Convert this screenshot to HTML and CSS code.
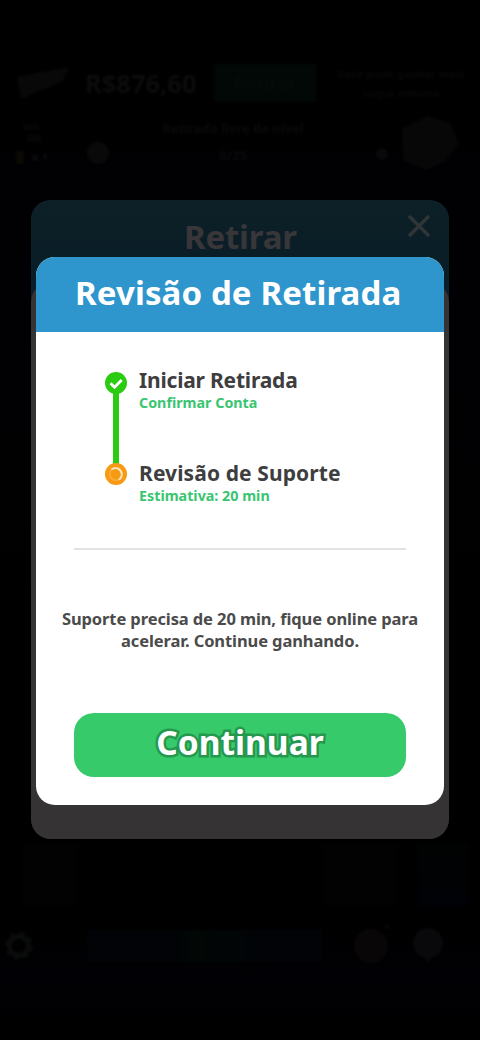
FILE: index.html
```html
<!DOCTYPE html>
<html lang="pt-BR">
<head>
<meta charset="utf-8">
<title>Revisão de Retirada</title>
<link rel="stylesheet" href="styles.css">
</head>
<body>
<div class="screen">
  <div class="game">
    <div class="top">
      <svg class="cash" viewBox="0 0 56 36"><path d="M2 12 54 2 48 16 6 34Z" fill="#080808"/></svg>
      <span class="balance">R$876,60</span>
      <span class="withdraw">Retirar</span>
      <span class="hint">Você pode ganhar mais<br>saque mínimo</span>
    </div>
    <div class="level">
      <svg class="coin" viewBox="0 0 36 50"><path d="M8 4h16v6H8zm4 10h14v8H12z" fill="#050505"/><path d="M1 31h8v13H1z" fill="#0a0904"/><path d="M17 35h6v6h-6zM27 34h6l-3 8" fill="#09090e"/></svg>
      <svg class="dot" viewBox="0 0 24 24"><circle cx="12" cy="12" r="11" fill="#09090a"/></svg>
      <span class="goal">Retirada livre de nível<br><small>0/25</small></span>
      <svg class="star" viewBox="0 0 14 14"><circle cx="7" cy="7" r="6" fill="#09090b"/></svg>
      <svg class="prize" viewBox="0 0 60 58"><path d="M2 14 28 2 50 9 59 30 44 48 26 56 3 47Z" fill="#070707"/></svg>
    </div>
    <div class="tiles"><i class="tile"></i><i class="tile warm"></i><i class="tile cool"></i></div>
    <div class="bottom">
      <svg class="gear" viewBox="0 0 30 30"><circle cx="15" cy="15" r="9.500" fill="none" stroke="#0a0b0b" stroke-width="5"/><circle cx="15" cy="15" r="12.500" fill="none" stroke="#0a0b0b" stroke-width="3" stroke-dasharray="5 4.800"/></svg>
      <i class="bar"></i>
      <svg class="round" viewBox="0 0 36 36"><circle cx="18" cy="18" r="17" fill="#090607"/><path d="m31 0 4-5v6z" fill="#0a0a0a"/></svg>
      <svg class="round" viewBox="0 0 36 36"><circle cx="17" cy="15" r="15" fill="#09080a"/><path d="m12 26 5 10 5-10" fill="#09080a"/></svg>
    </div>
  </div>

  <section class="back-modal">
    <header class="back-head">
      <h2 class="back-title">Retirar</h2>
      <svg class="close" viewBox="0 0 24 24"><path d="M2 2 22 22M22 2 2 22" stroke="#303638" stroke-width="3.400"/></svg>
    </header>
    <div class="back-body"></div>
  </section>

  <section class="modal">
    <header class="head"><h1 class="title">Revisão de Retirada</h1></header>
    <div class="content">
      <div class="steps">
        <svg class="track" viewBox="0 0 22 114">
          <path d="M11 11v91" stroke="#2acb10" stroke-width="6"/>
          <circle cx="11" cy="11" r="11" fill="#2acb10"/>
          <path d="m5.500 11.300 4 3.900 7.200-7.200" fill="none" stroke="#fff" stroke-width="2.800"/>
          <circle cx="11" cy="102" r="11" fill="#f79a12"/>
          <circle cx="11" cy="102" r="6.300" fill="none" stroke="#fbb044" stroke-width="1.500"/>
          <path d="M7.200 97A6.300 6.300 0 0 1 14.500 107.200" fill="none" stroke="#ffe9c4" stroke-width="2" stroke-linecap="round"/>
        </svg>
        <div class="labels">
          <div class="step done"><span class="name">Iniciar Retirada</span><span class="sub">Confirmar Conta</span></div>
          <div class="step active"><span class="name">Revisão de Suporte</span><span class="sub">Estimativa: 20 min</span></div>
        </div>
      </div>
      <hr class="rule">
      <p class="note">Suporte precisa de 20 min, fique online para<br>acelerar. Continue ganhando.</p>
      <button class="go" type="button">Continuar</button>
    </div>
  </section>
</div>
</body>
</html>
```
FILE: styles.css
```css
* { box-sizing: border-box; }
body { margin: 0; background: #000; font-family: "Noto Sans", sans-serif; font-weight: 700; }
h1, h2, p { margin: 0; white-space: nowrap; }
svg { display: block; flex: none; overflow: visible; }
.screen { position: relative; width: 480px; height: 1040px; overflow: hidden; background: #000; }

.game { display: flex; flex-direction: column; height: 1040px; padding-top: 64px; color: #0c0c0c; background: linear-gradient(#000 130px, #010104 170px, #010103 300px, #000 820px, #000 920px, #010105 980px, #000 1035px); }
.top { display: flex; align-items: center; height: 38px; padding-left: 15px; filter: blur(.8px); }
.cash { width: 56px; height: 36px; }
.balance { width: 126px; margin-left: 14px; font-size: 25.500px; white-space: nowrap; }
.withdraw { width: 102px; height: 38px; margin-left: 3px; background: #020806; color: #040b08; font-size: 18px; line-height: 38px; text-align: center; }
.hint { width: 150px; margin-left: 10px; color: #080808; font-size: 11px; line-height: 19px; text-align: center; white-space: nowrap; }
.level { display: flex; height: 60px; margin-top: 12px; padding-left: 15px; filter: blur(.8px); }
.coin { width: 36px; height: 50px; margin-top: 6px; }
.dot { width: 24px; height: 24px; margin: 27px 0 0 35px; }
.goal { width: 246px; margin-top: 1px; color: #0a0a0b; font-size: 13px; line-height: 27px; text-align: center; }
.goal small { font-size: 13px; }
.star { width: 14px; height: 14px; margin: 33px 0 0 19px; }
.prize { width: 60px; height: 58px; margin-left: 11px; }
.tiles { display: flex; gap: 8px; margin-top: 670px; padding-left: 22px; filter: blur(2px); }
.tile { width: 56px; height: 62px; background: #020202; }
.warm { width: 76px; margin-left: 236px; background: #030202; }
.cool { width: 50px; margin-left: 12px; background: linear-gradient(#010303, #010204 60%, #010208); }
.bottom { display: flex; align-items: center; height: 40px; margin-top: 20px; padding-left: 4px; filter: blur(.8px); }
.gear { width: 30px; height: 30px; }
.bar { width: 235px; height: 32px; margin-left: 53px; background: linear-gradient(90deg, #010306 35%, #020605 45%, #020505 65%, #010307 75%); }
.round { width: 36px; height: 36px; margin-left: 31px; }
.round + .round { margin-left: 22px; }

.back-modal { position: absolute; left: 31px; top: 200px; width: 418px; height: 639px; border-radius: 20px; background: #0a1f29; overflow: hidden; }
.back-head { display: flex; height: 82px; padding: 14px 18px 0 153px; justify-content: space-between; background: linear-gradient(#0d2027, #091d27); }
.back-title { color: #383639; font-size: 33px; letter-spacing: -.2px; line-height: 45px; }
.close { width: 24px; height: 24px; }
.back-body { height: 557px; border-radius: 20px 20px 0 0; background: #353334; }

.modal { position: absolute; left: 36px; top: 257px; width: 408px; height: 548px; border-radius: 19px; background: #fff; overflow: hidden; }
.head { height: 75px; padding-left: 39px; background: #2f95cd; }
.title { color: #fff; font-size: 33px; letter-spacing: .12px; line-height: 71px; }
.content { display: flex; flex-direction: column; padding: 40px 38px 0; }
.steps { display: flex; gap: 12px; height: 176px; padding-left: 31px; }
.track { width: 22px; height: 114px; }
.labels { display: flex; flex-direction: column; margin-top: -6px; }
.step { display: flex; flex-direction: column; align-items: flex-start; flex: none; height: 93px; white-space: nowrap; }
.name { color: #3e3e40; font-size: 21px; line-height: 28px; }
.done .name { letter-spacing: -.2px; }
.active .name { letter-spacing: .1px; }
.sub { color: #3ac571; font-size: 14.300px; line-height: 18px; }
.rule { width: 332px; height: 2px; margin: 0; border: 0; background: #e3e3e3; }
.note { margin: 58px -20px 0; color: #4b4b4b; font-size: 16.500px; letter-spacing: -.1px; line-height: 21.500px; text-align: center; }
.go { height: 64px; margin-top: 62px; padding: 0 0 6px; border: 0; border-radius: 20px; background: #36ca6b; color: #fff; font: 700 33.500px/58px "Noto Sans", sans-serif; -webkit-text-stroke: 5px #25984e; paint-order: stroke fill; }
```
